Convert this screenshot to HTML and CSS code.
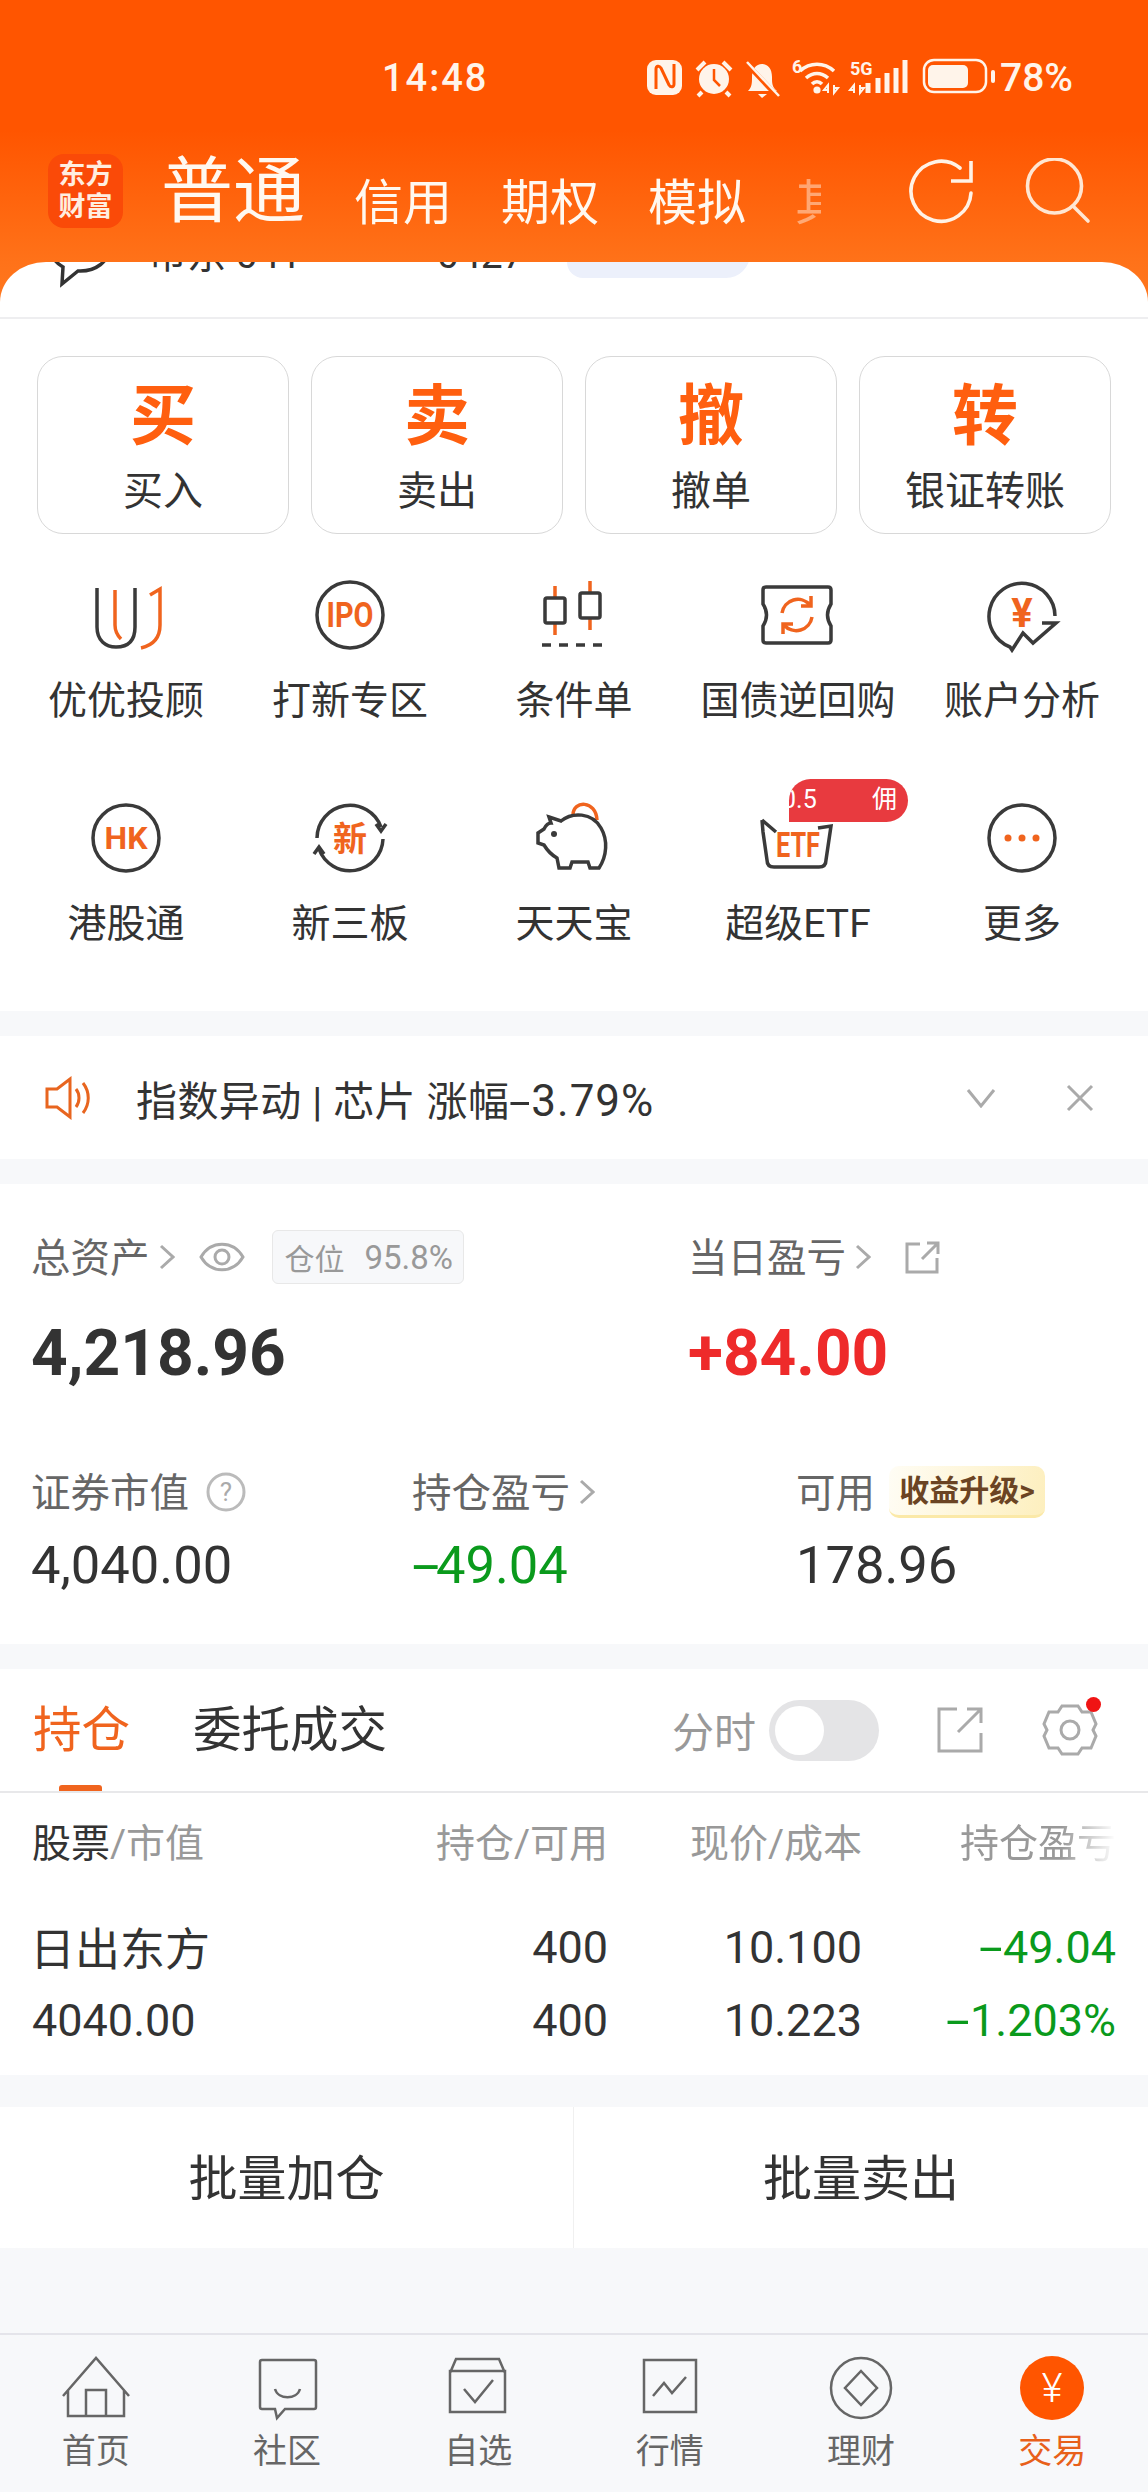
FILE: index.html
```html
<!DOCTYPE html>
<html lang="zh-CN">
<head>
  <meta charset="UTF-8">
  <title>交易</title>
  <link rel="stylesheet" href="styles.css">
</head>
<body>
<div class="app">

  <div class="head">
    <div class="status">
      <span class="time">14:48</span>
      <svg class="status-icons" width="360" height="45" viewBox="0 0 360 45">
        <rect x="7" y="5" width="35" height="35" rx="9" fill="#fff4ea"/>
        <path d="M16 34V14C16 11 19 10 21 13L29 30C31 33 34 32 34 29V9" fill="none" stroke="#ff5500" stroke-width="3"/>
        <circle cx="74" cy="24" r="15" fill="#fff4ea"/>
        <path d="M74 14V25L80 31" fill="none" stroke="#ff5500" stroke-width="2.5"/>
        <path d="M57 15L65 7M91 15L83 7M62 37L58 41M86 37L90 41" stroke="#fff4ea" stroke-width="4"/>
        <path d="M108 36C112 32 112 28 112 22C112 14 116 9 122 9C128 9 132 14 132 22C132 28 132 32 137 36Z" fill="#fff4ea"/>
        <path d="M118 39H127L122 43Z" fill="#fff4ea"/>
        <path d="M106 8L138 42" stroke="#ff5500" stroke-width="5"/>
        <path d="M107 7L139 41" stroke="#fff4ea" stroke-width="2.5"/>
        <text x="152" y="18" class="si-small">6</text>
        <path d="M160 16C170 7 184 7 194 16M166 23C173 17 181 17 188 23M172 29C175 26 179 26 182 29" fill="none" stroke="#fff4ea" stroke-width="3.6"/>
        <circle cx="177" cy="35" r="3.6" fill="#fff4ea"/>
        <path d="M188 38V30L184 35H188M194 30V38L198 33H194" fill="none" stroke="#fff4ea" stroke-width="2"/>
        <text x="210" y="20" class="si-small">5G</text>
        <path d="M214 38V30L210 35H214M220 30V38L224 33H220" fill="none" stroke="#fff4ea" stroke-width="2"/>
        <path d="M228 28V38M238 23V38M247 18V38M256 13V38M265 5V38" stroke="#fff4ea" stroke-width="5"/>
        <rect x="284" y="5" width="62" height="32" rx="10" fill="none" stroke="#fff4ea" stroke-width="2.5"/>
        <rect x="288" y="10" width="40" height="23" rx="5" fill="#fff4ea"/>
        <rect x="351" y="15" width="4" height="13" rx="2" fill="#fff4ea"/>
      </svg>
      <span class="battery">78%</span>
    </div>

    <div class="bar">
      <div class="logo">东方<br>财富</div>
      <span class="tab-main">普通</span>
      <span class="tab">信用</span>
      <span class="tab">期权</span>
      <span class="tab">模拟</span>
      <span class="tab tab-cut"><span>其他</span></span>
      <svg class="bar-icons" width="190" height="70" viewBox="0 0 190 70">
        <path d="M59 10A30 30 0 1 0 70 35" fill="none" stroke="#fff2e6" stroke-width="3.6" stroke-linecap="round"/>
        <path d="M70 3V23H50" fill="none" stroke="#fff2e6" stroke-width="3.6"/>
        <circle cx="153.500" cy="28" r="27" fill="none" stroke="#ffe6d2" stroke-width="3.6"/>
        <path d="M172 48L187 63" stroke="#ffe6d2" stroke-width="3.6" stroke-linecap="round"/>
      </svg>
    </div>
  </div>

  <div class="card">
    <div class="ticker">
      <div class="ticker-in">
        <svg width="64" height="70" viewBox="0 0 64 70">
          <path d="M32 6C16 6 3 16 3 28C3 36 8 43 15 47L14 64L30 51C48 52 61 41 61 28C61 16 48 6 32 6Z" fill="none" stroke="#333" stroke-width="3.500"/>
        </svg>
        <span class="ticker-name">市东 041</span>
        <span class="ticker-num">0427</span>
        <span class="ticker-tag">可解读</span>
      </div>
    </div>

    <div class="actions">
      <div class="action"><b>买</b><span>买入</span></div>
      <div class="action"><b>卖</b><span>卖出</span></div>
      <div class="action"><b>撤</b><span>撤单</span></div>
      <div class="action"><b>转</b><span>银证转账</span></div>
    </div>

    <div class="shortcuts">
      <div class="shortcut">
        <svg width="80" height="80" viewBox="0 0 80 80" class="ico">
          <path d="M11 13V52C11 66 20 72 30 72C42 72 49 66 49 52V13"/>
          <path class="or" d="M29 15V50C29 56 31 60 35 64M64 20L74 14V50C74 62 68 70 55 73"/>
        </svg>
        <span>优优投顾</span>
      </div>
      <div class="shortcut">
        <svg width="80" height="80" viewBox="0 0 80 80" class="ico">
          <circle cx="40" cy="40" r="33"/>
          <text x="40" y="52" class="ico-txt ico-tall" textLength="47" lengthAdjust="spacingAndGlyphs">IPO</text>
        </svg>
        <span>打新专区</span>
      </div>
      <div class="shortcut">
        <svg width="80" height="80" viewBox="0 0 80 80" class="ico">
          <path class="or" d="M21 11V23M21 48V60M56 6V18M56 43V55"/>
          <rect x="11" y="23" width="20" height="25" rx="2"/>
          <rect x="46" y="18" width="20" height="25" rx="2"/>
          <path d="M8 70H70" stroke-dasharray="9 8"/>
        </svg>
        <span>条件单</span>
      </div>
      <div class="shortcut">
        <svg width="80" height="80" viewBox="0 0 80 80" class="ico">
          <path d="M8 12H70Q73 12 73 15V29Q66 40 73 51V65Q73 68 70 68H8Q5 68 5 65V51Q12 40 5 29V15Q5 12 8 12Z"/>
          <path class="or" d="M24 38A16 16 0 0 1 52 30M54 42A16 16 0 0 1 26 50M53 21V31H43M25 59V49H35"/>
        </svg>
        <span>国债逆回购</span>
      </div>
      <div class="shortcut">
        <svg width="80" height="80" viewBox="0 0 80 80" class="ico">
          <path d="M73 41A33 33 0 1 0 28 72L30 75L41 58L51 68L74 48H60"/>
          <text x="40" y="52" class="ico-txt ico-yen">¥</text>
        </svg>
        <span>账户分析</span>
      </div>
      <div class="shortcut">
        <svg width="80" height="80" viewBox="0 0 80 80" class="ico">
          <circle cx="40" cy="40" r="33"/>
          <text x="40" y="51" class="ico-txt">HK</text>
        </svg>
        <span>港股通</span>
      </div>
      <div class="shortcut">
        <svg width="80" height="80" viewBox="0 0 80 80" class="ico">
          <path d="M7 40A33 33 0 0 1 71 29M66 26L71 33L76 26"/>
          <path d="M73 41A33 33 0 0 1 9 51M4 56L9 49L14 56"/>
          <text x="40" y="53" class="ico-txt ico-xin">新</text>
        </svg>
        <span>新三板</span>
      </div>
      <div class="shortcut">
        <svg width="80" height="80" viewBox="0 0 80 80" class="ico">
          <path class="or" d="M39 17C39 2 62 2 63 22"/>
          <path d="M15 19L27 23C38 14 58 14 67 30C74 42 73 58 65 70H56L54 64H38L36 70H25L23 60C16 56 13 52 10 47L4 45V35L10 31C12 27 15 25 17 25Z"/>
          <circle class="dot" cx="20" cy="36" r="3"/>
        </svg>
        <span>天天宝</span>
      </div>
      <div class="shortcut">
        <svg width="80" height="80" viewBox="0 0 80 80" class="ico">
          <path d="M4 22L5 34L9 62Q9 69 16 69H61Q68 69 68 62L73 28L60 30M4 22L18 34"/>
          <text x="40" y="59" class="ico-txt ico-tall" textLength="44" lengthAdjust="spacingAndGlyphs">ETF</text>
        </svg>
        <span>超级ETF</span>
        <div class="etf-tip"><i>0.5</i><i>佣</i></div>
      </div>
      <div class="shortcut">
        <svg width="80" height="80" viewBox="0 0 80 80" class="ico">
          <circle cx="40" cy="40" r="33"/>
          <circle class="dot-or" cx="26" cy="40" r="3.500"/>
          <circle class="dot-or" cx="40" cy="40" r="3.500"/>
          <circle class="dot-or" cx="54" cy="40" r="3.500"/>
        </svg>
        <span>更多</span>
      </div>
    </div>
  </div>

  <div class="notice">
    <svg width="46" height="44" viewBox="0 0 46 44" class="ico-notice">
      <path d="M2 13H12L25 3V41L12 31H2Z"/>
      <path d="M31 13C35 18 35 26 31 31M38 7C45 16 45 28 38 37"/>
    </svg>
    <span class="notice-text">指数异动 | 芯片 涨幅<span class="minus">-</span><span class="pct">3.79%</span></span>
    <svg width="30" height="20" viewBox="0 0 30 20" class="ico-gray notice-more"><path d="M2 2L15 18L28 2"/></svg>
    <svg width="28" height="28" viewBox="0 0 28 28" class="ico-gray notice-close"><path d="M2 2L26 26M26 2L2 26"/></svg>
  </div>

  <div class="assets">
    <div class="assets-top">
      <div class="lab">
        <span class="lab-t">总资产</span>
        <svg width="16" height="26" viewBox="0 0 16 26" class="ico-gray chev"><path d="M2 2L14 13L2 24"/></svg>
        <svg width="46" height="32" viewBox="0 0 46 32" class="ico-gray eye">
          <path d="M2 16C12 -1 34 -1 44 16C34 33 12 33 2 16Z"/>
          <circle cx="23" cy="16" r="7"/>
        </svg>
        <span class="pos-tag">仓位<em>95.8%</em></span>
      </div>
      <div class="lab">
        <span class="lab-t">当日盈亏</span>
        <svg width="16" height="26" viewBox="0 0 16 26" class="ico-gray chev"><path d="M2 2L14 13L2 24"/></svg>
        <svg width="36" height="34" viewBox="0 0 36 34" class="ico-gray share-s">
          <path d="M16 3H3V31H33V17M18 18L33 3M23 2H34V13"/>
        </svg>
      </div>
    </div>
    <div class="assets-top nums-big">
      <div class="big">4,218.96</div>
      <div class="big red">+84.00</div>
    </div>
    <div class="assets-low">
      <div class="lab">
        <span class="lab-t">证券市值</span>
        <svg width="40" height="40" viewBox="0 0 40 40" class="help">
          <circle cx="20" cy="20" r="18"/>
          <text x="20" y="29">?</text>
        </svg>
      </div>
      <div class="lab">
        <span class="lab-t">持仓盈亏</span>
        <svg width="16" height="26" viewBox="0 0 16 26" class="ico-gray chev"><path d="M2 2L14 13L2 24"/></svg>
      </div>
      <div class="lab">
        <span class="lab-t">可用</span>
        <span class="up-tag">收益升级&gt;</span>
      </div>
    </div>
    <div class="assets-low nums-mid">
      <div class="mid">4,040.00</div>
      <div class="mid green"><span class="minus">-</span>49.04</div>
      <div class="mid">178.96</div>
    </div>
  </div>

  <div class="hold">
    <div class="hold-tabs">
      <span class="hold-tab on">持仓</span>
      <span class="hold-tab">委托成交</span>
      <span class="fen">分时</span>
      <span class="switch"><i></i></span>
      <svg width="46" height="46" viewBox="0 0 46 46" class="ico-gray share-b">
        <path d="M20 2H2V44H44V26M21 25L44 2M30 2H44V16"/>
      </svg>
      <span class="gear">
        <svg width="56" height="54" viewBox="0 0 56 54" class="ico-gray">
          <path d="M20 3H36L40 9L49 9L54 21L51 27L54 33L49 45L40 45L36 51H20L16 45L7 45L2 33L5 27L2 21L7 9L16 9Z"/>
          <circle cx="28" cy="27" r="9"/>
        </svg>
        <i></i>
      </span>
    </div>

    <div class="tbl-row tbl-head">
      <div class="c1"><span class="dark">股票</span>/市值</div>
      <div>持仓/可用</div>
      <div>现价/成本</div>
      <div><span class="fade">持仓盈亏</span></div>
    </div>
    <div class="tbl-row tbl-first">
      <div class="c1 stock-name">日出东方</div>
      <div>400</div>
      <div>10.100</div>
      <div class="green"><span class="minus">-</span>49.04</div>
    </div>
    <div class="tbl-row">
      <div class="c1">4040.00</div>
      <div>400</div>
      <div>10.223</div>
      <div class="green"><span class="minus">-</span>1.203%</div>
    </div>
  </div>

  <div class="batch">
    <div class="batch-btn">批量加仓</div>
    <div class="batch-btn">批量卖出</div>
  </div>

  <div class="space"></div>

  <div class="nav">
    <div class="nav-item">
      <svg width="80" height="80" viewBox="0 0 80 80">
        <path d="M7 50L40 12L73 50M12 44V70H68V44M30 70V44H50V70"/>
      </svg>
      <span>首页</span>
    </div>
    <div class="nav-item">
      <svg width="80" height="80" viewBox="0 0 80 80">
        <path d="M15 14H67Q69 14 69 16V61Q69 63 67 63H38L30 72L28 63H15Q13 63 13 61V16Q13 14 15 14Z"/>
        <path d="M28 43C31 54 50 54 53 43"/>
      </svg>
      <span>社区</span>
    </div>
    <div class="nav-item">
      <svg width="80" height="80" viewBox="0 0 80 80">
        <path d="M12 27L18 13H61L67 27M12 25H67V66H12ZM26 43L37 56L55 34"/>
      </svg>
      <span>自选</span>
    </div>
    <div class="nav-item">
      <svg width="80" height="80" viewBox="0 0 80 80">
        <path d="M14 14H66V66H14ZM23 50L34 37L42 47L56 31"/>
      </svg>
      <span>行情</span>
    </div>
    <div class="nav-item">
      <svg width="80" height="80" viewBox="0 0 80 80">
        <circle cx="40" cy="42" r="30"/>
        <path d="M40 25L56 42L40 59L24 42Z"/>
      </svg>
      <span>理财</span>
    </div>
    <div class="nav-item on">
      <svg width="80" height="80" viewBox="0 0 80 80">
        <circle class="nav-dot" cx="40" cy="42" r="32"/>
        <text x="40" y="56" class="nav-yen">¥</text>
      </svg>
      <span>交易</span>
    </div>
  </div>

</div>
</body>
</html>
```

FILE: styles.css
```css
* { box-sizing: border-box; }

body {
  margin: 0;
  font-family: Roboto, "Noto Sans CJK SC", sans-serif;
  color: #333;
  background: #f7f8fa;
}

.app {
  width: 1148px;
  height: 2492px;
  display: flex;
  flex-direction: column;
  overflow: hidden;
  background: linear-gradient(#ff5500 0, #ff5500 130px, #ff7219 262px, #ff7a22 320px) no-repeat;
  background-size: 100% 320px;
  background-color: #f7f8fa;
}

/* top orange part */
.head { height: 262px; color: #fff8f0; flex: none; }

.status { display: flex; align-items: flex-start; height: 100px; padding: 55px 0 0 382px; }
.time { width: 258px; font-size: 38px; line-height: 46px; font-weight: 500; letter-spacing: 2px; color: #fff4ea; }
.battery { font-size: 39px; line-height: 46px; font-weight: 500; color: #fff4ea; }
.si-small { font-size: 18px; font-weight: 700; fill: #fff4ea; font-family: Roboto, sans-serif; }

.bar { display: flex; align-items: center; height: 184px; margin-top: -1px; padding: 0 0 0 48px; }
.logo {
  width: 75px;
  height: 74px;
  margin-right: 38px;
  border-radius: 16px;
  background: #fa4a08;
  text-align: center;
  font-size: 27px;
  line-height: 32px;
  font-weight: 700;
  padding-top: 5px;
  color: #ffeee0;
}
.tab-main { font-size: 72px; line-height: 80px; margin-right: 49px; margin-top: 2px; }
.tab { font-size: 49px; line-height: 60px; margin-right: 49px; margin-top: 25px; }
.tab-cut {
  width: 26px;
  margin-right: 0;
  overflow: hidden;
  white-space: nowrap;
  opacity: .45;
}
.bar-icons { margin-left: 80px; margin-top: 4px; }

/* white card */
.card { height: 749px; background: #fff; border-radius: 46px 46px 0 0 / 40px 40px 0 0; overflow: hidden; flex: none; }

.ticker { height: 57px; overflow: hidden; border-bottom: 2px solid #eeeef0; }
.ticker-in { display: flex; align-items: flex-start; margin-top: -42px; padding-left: 48px; }
.ticker-name { font-size: 39px; line-height: 60px; margin: 5px 0 0 36px; width: 289px; }
.ticker-num { font-size: 39px; line-height: 60px; margin-top: 5px; width: 130px; }
.ticker-tag {
  width: 183px;
  height: 62px;
  padding-left: 60px;
  font-size: 30px;
  line-height: 52px;
  background: #ecf0fb;
  border-radius: 0 0 24px 16px;
  margin-top: -4px;
}

.actions { display: grid; grid-template-columns: repeat(4, 1fr); gap: 22px; padding: 37px 37px 0 37px; }
.action {
  height: 178px;
  border: 1px solid #d8d8d8;
  border-radius: 26px;
  display: flex;
  flex-direction: column;
  align-items: center;
  padding-top: 24px;
}
.action b { font-size: 66px; line-height: 72px; color: #ff5f0f; font-weight: 700; }
.action span { font-size: 40px; line-height: 50px; margin-top: 14px; }

.shortcuts { display: grid; grid-template-columns: repeat(5, 1fr); row-gap: 72px; padding: 41px 14px 0; }
.shortcut { display: flex; flex-direction: column; align-items: center; position: relative; }
.shortcut span { font-size: 39px; line-height: 50px; margin-top: 21px; white-space: nowrap; }

.ico { fill: none; stroke: #3a3a3a; stroke-width: 3.5; }
.ico .or { stroke: #f0641e; }
.ico .dot { fill: #3a3a3a; stroke: none; }
.ico .dot-or { fill: #f0641e; stroke: none; }
.ico-txt {
  fill: #f0641e;
  stroke: none;
  font-size: 32px;
  font-weight: 700;
  text-anchor: middle;
  font-family: Roboto, sans-serif;
}
.ico-tall { font-size: 35px; }
.ico-yen { font-size: 40px; }
.ico-xin { font-size: 34px; font-family: "Noto Sans CJK SC", sans-serif; }

.etf-tip {
  position: absolute;
  left: 103px;
  top: -19px;
  width: 119px;
  height: 43px;
  overflow: hidden;
  display: flex;
  justify-content: space-between;
  padding-right: 11px;
  background: #e83a3f;
  border-radius: 22px 22px 22px 0;
  color: #fff;
  font-size: 25px;
  line-height: 42px;
}
.etf-tip i { font-style: normal; }
.etf-tip i:first-child { margin-left: -7px; }

/* notice */
.notice { height: 123px; margin-top: 25px; background: #fff; display: flex; align-items: center; padding-left: 45px; flex: none; }
.notice-text { font-size: 41px; margin-left: 45px; letter-spacing: .4px; }
.pct { font-size: 44px; letter-spacing: 1px; }
/* hyphen in the reference font is wider than Roboto's */
.minus { display: inline-block; transform: scaleX(1.9); transform-origin: left center; margin-right: .25em; }
.ico-notice { fill: none; stroke: #e8651f; stroke-width: 3; }
.ico-gray { fill: none; stroke: #aaa; stroke-width: 3; }
.notice-more { margin-left: auto; }
.notice-close { margin-left: 70px; margin-right: 54px; }

/* assets */
.assets { height: 460px; margin-top: 25px; background: #fff; padding: 46px 0 0 31px; flex: none; }
.assets-top { display: grid; grid-template-columns: 657px 1fr; }
.assets-low { display: grid; grid-template-columns: 381px 384px 1fr; margin-top: 77px; }
.lab { display: flex; align-items: center; height: 54px; font-size: 39.5px; color: #666; }
.lab-t { margin-top: -5px; }
.assets-low .lab { height: 52px; }
.chev { margin-left: 9px; }
.eye { margin-left: 24px; }
.pos-tag {
  display: flex;
  align-items: center;
  height: 54px;
  margin-left: 27px;
  padding: 0 10px 0 12px;
  font-size: 30px;
  color: #999;
  background: #f7f8fa;
  border: 1px solid #e8e8e8;
  border-radius: 6px;
}
.pos-tag em { font-style: normal; font-size: 33px; margin-left: 20px; }
.share-s { margin-left: 33px; margin-top: 2px; }
.help { fill: none; stroke: #bbb; stroke-width: 3; margin-left: 17px; }
.help text { fill: #aaa; stroke: none; font-size: 26px; text-anchor: middle; }
.up-tag {
  display: block;
  margin-left: 14px;
  width: 156px;
  height: 52px;
  text-align: center;
  font-size: 30px;
  line-height: 50px;
  font-weight: 700;
  color: #6b4423;
  background: linear-gradient(100deg, #fffdf5, #fdefbe);
  border-bottom: 3px solid #fbe9a8;
  border-radius: 10px;
  white-space: nowrap;
}
.nums-big { margin-top: 35px; }
.big { font-size: 64px; line-height: 70px; font-weight: 700; }
.nums-mid { margin-top: 17px; }
.mid { font-size: 52.5px; line-height: 60px; }
.mid .minus { margin-right: .18em; }
.red { color: #ee2a2a; }
.green { color: #0a9a1c; }

/* holdings */
.hold { height: 406px; margin-top: 25px; background: #fff; flex: none; }
.hold-tabs { display: flex; align-items: center; height: 124px; padding-left: 33px; border-bottom: 2px solid #e8e8ea; }
.hold-tab { font-size: 48.5px; margin-right: 63px; line-height: 60px; margin-top: 2px; }
.hold-tab.on { color: #f0641e; position: relative; }
.hold-tab.on::after {
  content: "";
  position: absolute;
  left: 26px;
  bottom: -30px;
  width: 43px;
  height: 6px;
  border-radius: 3px 3px 0 0;
  background: #f0641e;
}
.fen { font-size: 42px; color: #999; margin-left: 222px; margin-top: -2px; }
.switch { width: 110px; height: 61px; margin-left: 13px; border-radius: 31px; background: #e4e4e6; padding: 6px; }
.switch i { display: block; width: 49px; height: 49px; border-radius: 50%; background: #fff; }
.share-b { margin-left: 58px; }
.gear { position: relative; margin-left: 59px; height: 54px; }
.gear i { position: absolute; top: -6px; right: -3px; width: 15px; height: 15px; border-radius: 50%; background: #f01414; }

.tbl-row { display: grid; grid-template-columns: 322px 254px 254px 254px; padding: 0 32px; height: 73px; align-items: center; text-align: right; font-size: 45px; }
.tbl-row .c1 { text-align: left; }
.tbl-head { height: 100px; font-size: 39px; color: #999; padding-bottom: 6px; }
.tbl-head .dark { color: #333; }
.fade { -webkit-mask-image: linear-gradient(to right, #000 65%, transparent 100%); mask-image: linear-gradient(to right, #000 65%, transparent 100%); display: inline-block; }
.tbl-first { margin-top: 18px; }
.stock-name { margin-left: -2px; margin-top: -2px; }

.batch { display: grid; grid-template-columns: 574px 1fr; height: 141px; margin-top: 32px; background: #fff; flex: none; }
.batch-btn { display: flex; align-items: center; justify-content: center; font-size: 49px; padding-bottom: 6px; }
.batch-btn:first-child { border-right: 1px solid #f0f0f0; }

.space { flex: 1; }

/* bottom nav */
.nav { display: grid; grid-template-columns: repeat(6, 1fr); height: 159px; padding-top: 11px; border-top: 2px solid #e4e4ea; background: #f7f8fa; flex: none; }
.nav-item { display: flex; flex-direction: column; align-items: center; color: #666; }
.nav-item span { font-size: 34px; line-height: 50px; }
.nav-item svg { fill: none; stroke: #666; stroke-width: 2.5; }
.nav-item.on { color: #e8601a; }
.nav-item svg .nav-dot { fill: #ff5500; stroke: none; }
.nav-item svg .nav-yen { fill: #fff; stroke: none; font-size: 40px; text-anchor: middle; font-family: Roboto, sans-serif; font-weight: 300; }
```
